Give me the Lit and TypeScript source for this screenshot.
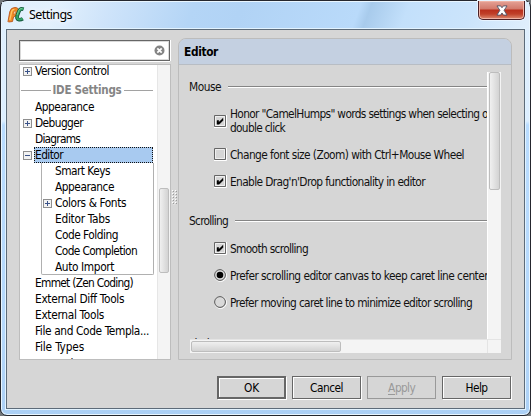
import { LitElement, html, css, svg } from "lit";
import { customElement, property } from "lit/decorators.js";

/* A line of text whose tracking is adjusted so it fills the given width. */
@customElement("ui-label")
class UiLabel extends LitElement {
  @property() text = "";
  @property({ type: Number }) w = 0;
  static styles = css`
    :host { display: inline-block; white-space: pre; flex: none; }
    span { display: inline-block; }
  `;
  render() {
    return html`<span>${this.text}</span>`;
  }
  updated() {
    const s = this.renderRoot.querySelector("span") as HTMLElement;
    if (!s || !this.w) return;
    s.style.letterSpacing = "0px";
    const natural = s.getBoundingClientRect().width;
    s.style.letterSpacing = (this.w - natural) / this.text.length + "px";
  }
}

const label = (text: string, w: number) => html`<ui-label .text=${text} .w=${w}></ui-label>`;

const before: [string, number, string][] = [
  ["Appearance", 59, ""],
  ["Debugger", 48, "+"],
  ["Diagrams", 45, ""],
];
const children: [string, number, string][] = [
  ["Smart Keys", 55, ""],
  ["Appearance", 59, ""],
  ["Colors & Fonts", 71, "+"],
  ["Editor Tabs", 55, ""],
  ["Code Folding", 63, ""],
  ["Code Completion", 82, ""],
  ["Auto Import", 59, ""],
];
const after: [string, number, string][] = [
  ["Emmet (Zen Coding)", 98, ""],
  ["External Diff Tools", 89, ""],
  ["External Tools", 69, ""],
  ["File and Code Templa...", 114, ""],
  ["File Types", 49, ""],
  ["General", 38, ""],
];

@customElement("app-root")
class AppRoot extends LitElement {
  static styles = css`
    * { box-sizing: border-box; }
    :host {
      display: block; width: 531px; height: 416px; overflow: hidden; background: #73777b;
      font: 11.8px/16px "DejaVu Sans Condensed", "DejaVu Sans", sans-serif; color: #000;
      font-stretch: condensed;
    }
    .window {
      width: 531px; height: 416px; border: 1px solid #25272e; border-radius: 7px; padding: 0 5px 6px;
      display: flex; flex-direction: column; box-shadow: inset 0 0 0 1px #e9f6ff;
      background: linear-gradient(180deg, #e0effd 0, #dceeff 120px, #b9dcff 124px, #b5d8fb 330px, #acd0f5 100%);
    }
    .title {
      flex: none; display: flex; margin: 1px -4px 0; padding-left: 5px; height: 27px;
      background: linear-gradient(110deg, #e0effc 0, #e3f1fd 10%, #cfe4fa 20%, #b4d5f6 36%, #b1d3f5 45%, #b9dafa 67%, #a8cbec 69%, #c3e0fb 76%, #cbe4fb 88%, #e0effc 100%);
    }
    .title ui-label {
      font: 12.5px/16px "Noto Sans", "Open Sans", sans-serif; margin: 5px 0 0 4px;
      text-shadow: 0 0 6px #fff, 0 0 6px #fff;
    }
    .logo { width: 18px; height: 17px; margin-top: 4px; flex: none; }
    .close {
      margin: -1px 4px 0 auto; width: 47px; height: 19px; border: 1px solid #4b2026; border-top: 0;
      border-radius: 0 0 5px 5px; box-shadow: inset 0 0 0 1px #efb3a5, 0 0 0 1px #e8f4ff;
      background: linear-gradient(#e5a296 0, #d2796b 8px, #b92f1c 9px, #c04029 13px, #dd8b70 18px);
      display: flex; justify-content: center;
    }
    .close svg { width: 12px; height: 11px; margin-top: 4px; }
    .client {
      flex: 1; border: 1px solid #5d6b79; background: #d6d6d6; display: flex; flex-direction: column;
      padding: 8px 12px; box-shadow: 0 0 0 1px #e2f3ff; min-height: 0;
    }
    .main { display: flex; height: 322px; flex: none; }
    .side { width: 152px; padding-top: 2px; }
    .search {
      width: 151px; height: 21px; background: #fff; border: 1px solid #666; display: flex;
      align-items: center; justify-content: flex-end; padding-right: 4px;
      box-shadow: inset 0 0 0 1px #d9d9d9, 0 1px 0 #fff, 1px 0 0 #fff;
    }
    .search svg { width: 11px; height: 11px; }
    .tree {
      margin-top: 3px; width: 152px; height: 296px; border: 1px solid #bdbdbd; background: #fff;
      display: flex; overflow: hidden;
    }
    .rows { flex: 1; margin-top: -2px; min-width: 0; }
    .row { height: 16px; display: flex; align-items: center; }
    .row:last-child { padding-top: 2px; }
    .kids .row:last-child { padding-top: 0; }
    .tw { width: 15px; padding-left: 3px; flex: none; display: flex; }
    .box { width: 9px; height: 9px; display: block; }
    .sep {
      height: 20px; display: flex; align-items: center; gap: 2px; padding: 2px 4px 0 1px;
      color: #858585; font-weight: bold; font-size: 11.5px;
    }
    .sep i { flex: 1; height: 1px; background: #a2a2a2; }
    .sel {
      flex: 1; height: 16px; background: #a8caf0; outline: 1px dotted #111; outline-offset: -1px;
      margin: 0 4px 0 -1px; padding-left: 1px;
    }
    .kids { margin: 0 3px 0 21px; border: 1px solid #b0b0b0; border-radius: 0 0 2px 2px; height: 112px; border-top: 0; }
    .kids .tw { width: 13px; padding-left: 1px; }
    .vbar { background: #f4f4f4; border-left: 1px solid #e6e6e6; width: 13px; flex: none; }
    .thumb {
      border: 1px solid #bdbdbd; border-radius: 2px;
      background: linear-gradient(90deg, #f0f0f0, #d3d3d3);
    }
    .tree .thumb { width: 10px; height: 85px; margin: 123px 0 0 1px; }
    .grip { width: 7px; display: flex; align-items: center; }
    .grip svg { width: 5px; height: 16px; margin: 0 0 2px 1px; }
    .panel { width: 334px; height: 322px; border: 1px solid #bcbcbc; border-radius: 8px 8px 0 0; overflow: hidden; }
    .head { height: 26px; background: #c4d0e1; border-bottom: 1px solid #b8bdc4; padding: 5px 0 0 5px; font-weight: bold; }
    .scroll {
      margin: 7px 0 0 11px; width: 311px; height: 281px; display: grid;
      grid-template-columns: 297px 14px; grid-template-rows: 267px 14px;
    }
    .view { overflow: hidden; color: #111; padding-top: 7px; margin-left: -1px; }
    .group { display: flex; align-items: center; height: 16px; gap: 7px; }
    .group i { flex: 1; height: 2px; background: #858585; border-bottom: 1px solid #fff; margin-top: -1px; }
    .opt { display: flex; align-items: center; height: 27px; padding-left: 25px; gap: 3px; }
    .opt.two { height: 28px; margin-top: 12px; margin-bottom: 6px; }
    .opt.two svg { margin-top: 1px; }
    .opt.two div { display: flex; flex-direction: column; line-height: 14px; }
    .opt svg { width: 13px; height: 13px; flex: none; }
    .g2 { margin-top: 18px; margin-bottom: 6px; }
    .g3 { margin-top: 20px; }
    .v { background: #f4f4f4; border-left: 1px solid #fff; padding-left: 1px; }
    .v .thumb { width: 11px; height: 118px; }
    .h { background: #f4f4f4; border-top: 1px solid #e4e4e4; padding: 1px; }
    .h .thumb { width: 150px; height: 11px; background: linear-gradient(#f0f0f0, #d3d3d3); }
    .corner { background: #f4f4f4; border: solid #e4e4e4; border-width: 1px 0 0 1px; }
    .buttons { display: flex; justify-content: flex-end; gap: 6px; margin: 16px 1px 0 0; }
    .btn {
      width: 69px; height: 23px; border: 1px solid #666; display: flex; align-items: center; justify-content: center;
      box-shadow: inset 1px 1px 0 #fff, 1px 1px 0 #fff; padding-top: 1px;
    }
    .ok { border-width: 2px; padding-top: 0; }
    .off { border-color: #999; color: #999; box-shadow: none; }
    .off .key { line-height: 13px; height: 13px; border-bottom: 1px solid #999; }
  `;

  box(kind: string) {
    return kind
      ? html`<svg class="box" viewBox="0 0 9 9"><rect x=".5" y=".5" width="8" height="8" fill="#f2f2f2" stroke="#8e8e8e"/><path d=${kind === "+" ? "M2 4.5h5M4.5 2v5" : "M2 4.5h5"} stroke="#3a5288"/></svg>`
      : "";
  }
  row([t, w, k]: [string, number, string]) {
    return html`<div class="row"><span class="tw">${this.box(k)}</span>${label(t, w)}</div>`;
  }
  check(on: boolean) {
    return html`<svg viewBox="0 0 13 13"><path d="M0 12.5h12.5V0" stroke="#fff" fill="none"/><path d="M1.5 1.5h9v9h-9z" stroke="#f0f0f0" fill="none"/><path d="M.5 .5h11v11h-11z" fill="none" stroke="#666"/>${on
      ? svg`<path d="M3 5.5h1.8v1.8L9 3.2v2.2L5.2 9.3H3z" fill="#000" stroke="#000" stroke-width=".4"/>`
      : ""}</svg>`;
  }
  radio(on: boolean) {
    return html`<svg viewBox="0 0 13 13"><circle cx="6.5" cy="6.5" r="6" fill="none" stroke="#fff"/><circle cx="6" cy="6" r="5.4" fill="#d9d9d9" stroke="#555"/>${on
      ? svg`<circle cx="6" cy="6" r="3.3"/>`
      : ""}</svg>`;
  }

  render() {
    return html`<div class="window">
      <div class="title">
        <svg class="logo" viewBox="0 0 18 17">
          <path d="M1 15.5 2.8 5.5Q3.8 1.5 8 1.5q4 0 3.5 4T6.5 11L5.5 15.5 1.5 16z" fill="#f08a24" stroke="#b9531a" stroke-width=".9"/>
          <path d="M2.8 14 4.6 5.8Q5.1 3.4 7.4 3.4" fill="none" stroke="#ffc766" stroke-width="1.3"/>
          <path d="M6.4 8.6 7.2 5.2h1.7q.4 2.4-2.5 3.4z" fill="#fbe9c8" stroke="#b9531a" stroke-width=".5"/>
          <path d="M16.6 3.2Q13.2 2 12 5.2L10.4 9.2Q9.2 13.4 12 13.7q2 .2 3.8-1" fill="none" stroke="#14573a" stroke-width="3.7"/>
          <path d="M16.4 3.1Q13 2.1 12 5.2L10.4 9.2Q9.4 13.2 12 13.5q2 .1 3.6-.9" fill="none" stroke="#33a566" stroke-width="2.1"/>
          <path d="M15.4 2.4Q12.6 2.2 11.6 4.8L10 9" fill="none" stroke="#8ed6a4" stroke-width=".7"/>
        </svg>
        ${label("Settings", 43)}
        <div class="close"><svg viewBox="0 0 13 12"><path d="M1 1h4l1.5 2L8 1h4L8.8 5.8 12 11H8L6.5 8.7 5 11H1l3.2-5.2z" fill="#fff" stroke="#4f5467"/></svg></div>
      </div>
      <div class="client">
        <div class="main">
          <div class="side">
            <div class="search"><svg viewBox="0 0 11 11"><circle cx="5.5" cy="5.5" r="5" fill="#848484"/><path d="M3.3 3.3l4.4 4.4M7.7 3.3 3.3 7.7" stroke="#fff" stroke-width="1.7"/></svg></div>
            <div class="tree">
              <div class="rows">
                ${this.row(["Version Control", 74, "+"])}
                <div class="sep"><i></i>${label("IDE Settings", 69)}<i></i></div>
                ${before.map((r) => this.row(r))}
                <div class="row"><span class="tw">${this.box("-")}</span><div class="sel">${label("Editor", 28)}</div></div>
                <div class="kids">${children.map((r) => this.row(r))}</div>
                ${after.map((r) => this.row(r))}
              </div>
              <div class="vbar"><div class="thumb"></div></div>
            </div>
          </div>
          <div class="grip"><svg viewBox="0 0 5 16">${[0, 3, 6, 9, 12].map(
            (y) => svg`<path d=${`M0 ${y + 0.5}h1M3 ${y + 0.5}h1M1.5 ${y + 2}h1`} stroke="#fff"/><path d=${`M1 ${y + 1.5}h1M4 ${y + 1.5}h1`} stroke="#999"/>`
          )}</svg></div>
          <div class="panel">
            <div class="head">${label("Editor", 34)}</div>
            <div class="scroll">
              <div class="view">
                <div class="group g1">${label("Mouse", 32)}<i></i></div>
                <div class="opt two">${this.check(true)}<div>${label('Honor "CamelHumps" words settings when selecting on', 264)}${label("double click", 55)}</div></div>
                <div class="opt">${this.check(false)}${label("Change font size (Zoom) with Ctrl+Mouse Wheel", 234)}</div>
                <div class="opt">${this.check(true)}${label("Enable Drag'n'Drop functionality in editor", 195)}</div>
                <div class="group g2">${label("Scrolling", 39)}<i></i></div>
                <div class="opt">${this.check(true)}${label("Smooth scrolling", 78)}</div>
                <div class="opt">${this.radio(true)}${label("Prefer scrolling editor canvas to keep caret line centered", 270)}</div>
                <div class="opt">${this.radio(false)}${label("Prefer moving caret line to minimize editor scrolling", 242)}</div>
                <div class="group g3">${label("Limits", 29)}</div>
              </div>
              <div class="v"><div class="thumb"></div></div>
              <div class="h"><div class="thumb"></div></div>
              <div class="corner"></div>
            </div>
          </div>
        </div>
        <div class="buttons">
          <div class="btn ok">${label("OK", 15)}</div>
          <div class="btn">${label("Cancel", 33)}</div>
          <div class="btn off"><span class="key">${label("A", 7)}</span>${label("pply", 20)}</div>
          <div class="btn">${label("Help", 22)}</div>
        </div>
      </div>
    </div>`;
  }
}
